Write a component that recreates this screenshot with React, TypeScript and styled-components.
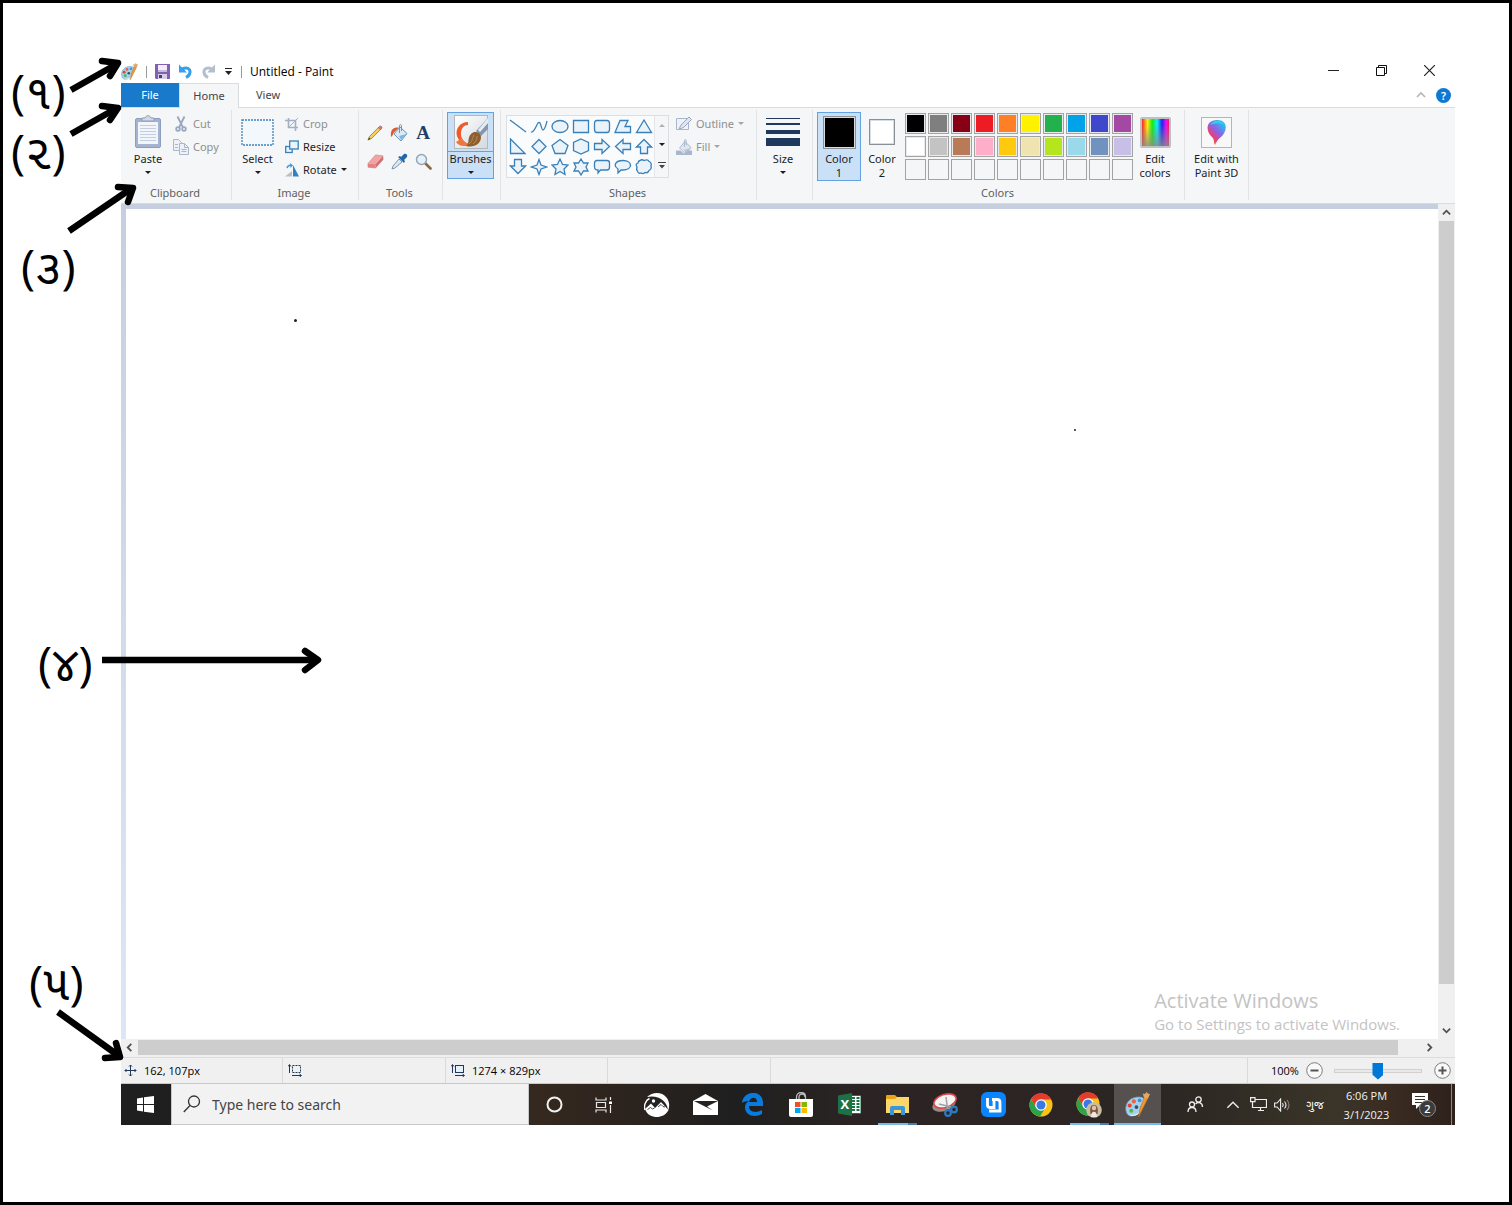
import React from "react";
import styled, { createGlobalStyle, css } from "styled-components";

const GlobalStyle = createGlobalStyle`
  *, *::before, *::after { box-sizing: border-box; }
  body { margin: 0; background: #fff; }
  body, input { font-family: "Open Sans", "Noto Sans", "Noto Sans Gujarati", sans-serif; }
  button { margin: 0; padding: 0; border: 0; background: none; color: inherit; font: inherit; }
  svg { display: block; flex: none; }
`;

/* ---------- page and window shell ---------- */

const Sheet = styled.div`
  position: relative;
  display: flex;
  min-height: 100vh;
  padding: 57px 54px 77px 118px;
  border: 3px solid #000;
  background: #fff;
`;

const Window = styled.main`
  flex: 1;
  min-width: 0;
  display: flex;
  flex-direction: column;
  font-size: 11px;
  line-height: 14px;
  color: #1e1e1e;
`;

const TitleBar = styled.header`
  display: flex;
  align-items: center;
  height: 23px;
`;

const QuickAccess = styled.div`
  display: flex;
  align-items: center;
  gap: 8px;
`;

const Rule = styled.span`
  width: 1px;
  height: 12px;
  background: #9a9a9a;
`;

const Title = styled.h1`
  margin: 0 auto 0 8px;
  font-size: 12px;
  font-weight: 400;
  color: #000;
`;

const Caption = styled.div`
  display: flex;
  align-self: flex-start;
  padding-right: 2px;
  height: 20px;
`;

const CaptionButton = styled.button`
  display: grid;
  place-items: center;
  width: 48px;
`;

const TabStrip = styled.nav`
  display: flex;
  height: 25px;
  border-bottom: 1px solid #dadbdc;
  font-family: "Noto Sans", "Open Sans", sans-serif;
`;

const Tab = styled.button<{ $kind?: "file" | "active" }>`
  width: 58px;
  height: 24px;
  color: #444;
  ${(p) => p.$kind === "file" && css`background: #1979ca; color: #fff;`}
  ${(p) =>
    p.$kind === "active" &&
    css`
      width: 60px;
      height: 25px;
      background: #f5f6f7;
      border: 1px solid #dadbdc;
      border-bottom: 0;
    `}
`;

const TabTools = styled.div`
  display: flex;
  align-items: center;
  gap: 10px;
  margin-left: auto;
  padding-right: 4px;
`;

/* ---------- ribbon ---------- */

const Ribbon = styled.section`
  display: flex;
  height: 96px;
  padding: 2px 0 3px;
  background: #f4f6f8;
  border-bottom: 1px solid #dadbdc;
  font-family: "Noto Sans", "Open Sans", sans-serif;
`;

const GroupBox = styled.section<{ $w: number }>`
  display: flex;
  flex-direction: column;
  flex: none;
  width: ${(p) => p.$w}px;
  padding-top: 2px;
  border-right: 1px solid #e2e3e5;
`;

const GroupBody = styled.div<{ $gap: number; $center?: boolean }>`
  display: flex;
  gap: ${(p) => p.$gap}px;
  height: 74px;
  padding-left: ${(p) => (p.$center ? 0 : 4)}px;
  justify-content: ${(p) => (p.$center ? "center" : "flex-start")};
`;

const GroupName = styled.h2`
  margin: 0;
  padding-right: 2px;
  font-size: 11px;
  font-weight: 400;
  line-height: 14px;
  color: #5f5f5f;
  text-align: center;
`;

const BigButton = styled.button<{ $w: number; $on?: boolean; $split?: boolean }>`
  display: flex;
  flex-direction: column;
  align-items: center;
  width: ${(p) => p.$w}px;
  height: ${(p) => (p.$split ? 67 : 69)}px;
  border: 1px solid ${(p) => (p.$on ? "#62a2e4" : "transparent")};
  background: ${(p) => (p.$on ? "#c9e0f7" : "none")};
`;

const BigIcon = styled.span<{ $split?: boolean }>`
  display: grid;
  place-items: center;
  align-self: stretch;
  height: 39px;
  border-bottom: 1px solid ${(p) => (p.$split ? "#62a2e4" : "transparent")};
`;

const BigText = styled.span`
  height: 14px;
  white-space: nowrap;
`;

const Caret = styled.i<{ $muted?: boolean }>`
  width: 0;
  height: 0;
  border: 3px solid transparent;
  border-top-color: ${(p) => (p.$muted ? "#a5a5a5" : "#1e1e1e")};
  border-bottom: 0;
`;

const CaretRow = styled.span`
  display: flex;
  align-items: center;
  height: 12px;
`;

const Rows = styled.div`
  display: flex;
  flex-direction: column;
  align-items: flex-start;
`;

const SmallButton = styled.button<{ $muted?: boolean }>`
  display: flex;
  align-items: center;
  gap: 4px;
  height: 23px;
  white-space: nowrap;
  color: ${(p) => (p.$muted ? "#8f8f8f" : "#1e1e1e")};
`;

const ToolGrid = styled.div`
  display: grid;
  grid-template-columns: repeat(3, 24px);
  grid-auto-rows: 29px;
  padding-top: 6px;
`;

const ToolButton = styled.button`
  display: grid;
  place-items: center;
`;

const ShapeBox = styled.div`
  display: flex;
  align-self: flex-start;
  margin: 3px 0 0 1px;
  border: 1px solid #dcdee1;
  background: #fafbfd;
`;

const ShapeGrid = styled.div`
  display: grid;
  grid-template-columns: repeat(7, 21px);
  grid-auto-rows: 20px;
  padding-top: 1px;
`;

const ShapeScroll = styled.div`
  display: grid;
  width: 14px;
  border-left: 1px solid #e4e6e9;
  background: #f4f6f8;
`;

const Palette = styled.div`
  display: grid;
  grid-template-columns: repeat(10, 21px);
  grid-auto-rows: 21px;
  gap: 2px;
  margin: 1px 2px 0;
  align-self: flex-start;
`;

const Swatch = styled.button<{ $c: string }>`
  border: 1px solid #a3a3a3;
  background: ${(p) => p.$c};
  box-shadow: inset 0 0 0 1px ${(p) => (p.$c === "transparent" ? "#f4f6f8" : "#e9eaec")};
`;

const ColorChip = styled.span<{ $c: string; $size: number }>`
  width: ${(p) => p.$size}px;
  height: ${(p) => p.$size}px;
  border: 1px solid #8a9096;
  background: ${(p) => p.$c};
  box-shadow: inset 0 0 0 1px #d5dce4;
`;

const Rainbow = styled.span`
  width: 31px;
  height: 31px;
  border: 2px solid #c0c0c0;
  border-radius: 2px;
  background: linear-gradient(transparent 20%, #8a8a8a 120%),
    linear-gradient(90deg, #f22, #fe1 20%, #1e1 38%, #1ef 56%, #22e 74%, #e1e 90%, #f15);
`;

const PaintTile = styled.span`
  display: grid;
  place-items: center;
  width: 31px;
  height: 31px;
  border: 1px solid #b5b5b5;
  background: #f8f8f8;
`;

/* ---------- canvas and scroll bars ---------- */

const Workspace = styled.section`
  flex: 1;
  display: flex;
`;

const Desk = styled.div`
  flex: 1;
  display: flex;
  padding: 5px 0 0 5px;
  background: linear-gradient(#c5cfe0, #dce6f4);
`;

const Canvas = styled.div`
  position: relative;
  flex: 1;
  display: flex;
  justify-content: flex-end;
  align-items: flex-end;
  padding: 0 38px 4px 0;
  background: #fff;
`;

const Dot = styled.i<{ $x: number; $y: number; $s: number }>`
  position: absolute;
  left: ${(p) => p.$x}px;
  top: ${(p) => p.$y}px;
  width: ${(p) => p.$s}px;
  height: ${(p) => p.$s}px;
  border-radius: 50%;
  background: #222;
`;

const Watermark = styled.div`
  color: #c3c3c3;
  font-size: 15px;
  line-height: 21px;
`;

const WatermarkTitle = styled.div`
  font-size: 20px;
  line-height: 26px;
`;

const ScrollBar = styled.div<{ $vertical?: boolean }>`
  display: flex;
  flex-direction: ${(p) => (p.$vertical ? "column" : "row")};
  background: #f0f0f0;
  ${(p) => (p.$vertical ? "width: 17px; padding: 0 1px;" : "height: 18px; padding: 1px 17px 2px 0;")}
`;

const ScrollArrow = styled.button`
  display: grid;
  place-items: center;
  flex: none;
  min-width: 15px;
  min-height: 15px;
  flex-basis: 17px;
`;

const Thumb = styled.span<{ $grow: number }>`
  flex: ${(p) => p.$grow};
  background: #cdcdcd;
`;

const Remain = styled.span<{ $grow: number }>`
  flex: ${(p) => p.$grow};
`;

/* ---------- status bar ---------- */

const StatusBar = styled.footer`
  display: grid;
  grid-template-columns: 162px 163px 162px 163px 1fr 207px;
  height: 27px;
  border-top: 1px solid #dcdcdc;
  border-bottom: 1px solid #c8c8c8;
  background: #f0f0f0;
`;

const StatusCell = styled.div`
  display: flex;
  align-items: center;
  gap: 7px;
  padding-left: 3px;
  color: #000;
  border-right: 1px solid #d9d9d9;
  &:nth-child(n + 2) { padding-left: 5px; }
  &:last-child { border-right: 0; padding: 0 4px 0 23px; }
`;

const ZoomButton = styled.button`
  flex: none;
`;

const ZoomRange = styled.input`
  appearance: none;
  flex: 1;
  min-width: 0;
  height: 16px;
  margin: 0 5px 0 4px;
  background: linear-gradient(#d0d0d0, #d0d0d0) center / 100% 4px no-repeat;
  &::-webkit-slider-runnable-track {
    height: 16px;
    background: linear-gradient(#e9e9e9, #e9e9e9) center / 98% 2px no-repeat;
  }
  &::-webkit-slider-thumb {
    appearance: none;
    width: 11px;
    height: 17px;
    background: #0078d7;
    clip-path: polygon(0 0, 100% 0, 100% 72%, 50% 100%, 0 72%);
  }
`;

/* ---------- taskbar ---------- */

const TaskBar = styled.footer`
  display: flex;
  height: 41px;
  background: linear-gradient(90deg, #1f1f1f 0%, #1f1f1f 4%, #35291f 31%, #2d241e 37%, #1f1f1f 46%, #2c2424 56%, #2b2523 76%, #302b24 83%, #3b3529 91%, #3a2c21 95%, #2e211c 100%);
`;

const TaskButton = styled.button<{ $w?: number; $state?: "open" | "active" }>`
  display: grid;
  place-items: center;
  flex: none;
  width: ${(p) => p.$w ?? 48}px;
  color: #fff;
  ${(p) =>
    p.$state === "open" &&
    css`
      background: linear-gradient(90deg, #76b9ed 0 78%, #4b7dab 78%) center bottom / 39px 2px no-repeat;
    `}
  ${(p) =>
    p.$state === "active" &&
    css`
      background: linear-gradient(#76b9ed, #76b9ed) center bottom / 47px 2px no-repeat,
        linear-gradient(#56514e, #56514e) center / 47px 100% no-repeat;
    `}
`;

const LanguageButton = styled(TaskButton)`
  font-size: 12px;
`;

const SearchBox = styled.label`
  display: flex;
  align-items: center;
  gap: 9px;
  width: 358px;
  margin-left: 1px;
  padding-left: 11px;
  background: #f2f2f2;
  border: 1px solid #c8c8c8;
  border-top: 0;
`;

const SearchInput = styled.input`
  flex: 1;
  min-width: 0;
  border: 0;
  outline: 0;
  background: none;
  font-family: "Noto Sans", "Open Sans", sans-serif;
  font-size: 14px;
  color: #444;
  &::placeholder { color: #444; opacity: 1; }
`;

const Pair = styled.div`
  display: flex;
  margin-right: 4px;
`;

const Tray = styled.div`
  display: flex;
  margin-left: auto;
  color: #f2f2f2;
`;

const Clock = styled.time`
  display: block;
  width: 61px;
  padding-top: 2px;
  font-size: 11px;
  line-height: 19px;
  text-align: center;
`;

const ShowDesktop = styled.button`
  width: 4px;
  border-left: 1px solid #8d8580;
`;

/* ---------- callouts over the window ---------- */

const Callout = styled.span<{ $x: number; $y: number }>`
  position: absolute;
  left: ${(p) => p.$x}px;
  top: ${(p) => p.$y}px;
  font-size: 48px;
  line-height: 54px;
  color: #000;
  white-space: nowrap;
`;

const Arrows = styled.svg`
  position: absolute;
  left: -3px;
  top: -3px;
  pointer-events: none;
`;

/* ---------- drawings ---------- */

const PaintLogo = ({ size = 17 }: { size?: number }) => (
  <svg width={size} height={size} viewBox="0 0 24 24">
    <path d="M1.500 20C-1 13 3 6 11 5c7-1 10 3 8 6-2 2-4 1-4 4 1 5-4 8-9 8-2 0-3.500-1-4.500-3z" fill="#a3d0ee" stroke="#6d9fc6" strokeWidth=".8" />
    <path d="M1.500 20c2 3 8 3 12.500-1-1 3-4 4-7 4-2 0-4.500-1-5.500-3z" fill="#e9f5fc" />
    <circle cx="8.500" cy="9" r="2" fill="#e7653c" /><circle cx="14" cy="8" r="1.800" fill="#3f8fd8" />
    <circle cx="4.500" cy="13" r="2" fill="#e24536" /><circle cx="6" cy="18" r="2" fill="#53b848" />
    <circle cx="11" cy="14.500" r="1.800" fill="#3c4d63" />
    <path d="M22 6L13 24l1.500-8.500L18.500 5z" fill="#f0982f" stroke="#b3691c" strokeWidth=".5" />
    <path d="M18.300 5.500L17 1.500l2.200.5L20.500 0l1.500 1.500 2 .5L22 6.500z" fill="#dfa76a" />
  </svg>
);

const Save = () => (
  <svg width="15" height="15" viewBox="0 0 15 15">
    <path d="M0 0h15v15H1l-1-1z" fill="#8460b0" />
    <path d="M3 1h9v7H3z" fill="#f0eef8" /><path d="M3 6h9v2H3z" fill="#c7b9e0" />
    <path d="M3 10h9v5H3z" fill="#d6cfe8" /><path d="M4 11h3v3H4z" fill="#4e3a78" />
  </svg>
);

const Turn = ({ color, flip }: { color: string; flip?: boolean }) => (
  <svg width="15" height="15" viewBox="0 0 15 15">
    <g transform={flip ? "matrix(-1 0 0 1 15 0)" : undefined}>
      <path d="M4 5c5-2.500 8.500 0 8 3.500-.3 2.500-2 4-4 5" fill="none" stroke={color} strokeWidth="3" />
      <path d="M1 .5v8h8z" fill={color} />
    </g>
  </svg>
);

const Clipboard = () => (
  <svg width="26" height="34" viewBox="0 0 26 34">
    <rect x=".5" y="3.500" width="25" height="29" rx="1.500" fill="#a4b3cf" stroke="#8c9dbd" />
    <rect x="3" y="7" width="20" height="22" fill="#f2f6fb" />
    <path d="M5 10.500h16M5 13.500h16M5 16.500h16M5 19.500h16M5 22.500h16M5 25.500h16" stroke="#c2cfe2" />
    <path d="M7 6V3h3c1-3 5-3 6 0h3v3z" fill="#cfd9e8" stroke="#8c9dbd" />
  </svg>
);

const Scissors = () => (
  <svg width="16" height="16" viewBox="0 0 16 16" fill="none" stroke="#9aa7be" strokeWidth="1.800">
    <path d="M4.500.5l5.500 11M11.500.5L6 11.500" /><circle cx="5" cy="13" r="1.800" /><circle cx="11" cy="13" r="1.800" />
  </svg>
);

const Pages = () => (
  <svg width="16" height="16" viewBox="0 0 16 16" fill="#eef2f8" stroke="#a9b6cc">
    <path d="M.5.5h5l3 3v8h-8z" /><path d="M6.500 4.500h5l4 4v7h-9z" /><path d="M11.500 4.500v4h4M8.500 10.500h5M8.500 12.500h5M2 5.500h3M2 8.500h3" fill="none" />
  </svg>
);

const Marquee = () => (
  <svg width="33" height="27" viewBox="0 0 33 27"><rect x="1" y="1" width="31" height="25" fill="#f3f8fc" stroke="#3e83bb" strokeWidth="1.300" strokeDasharray="2 1" /></svg>
);

const Crop = () => (
  <svg width="14" height="14" viewBox="0 0 14 14" fill="none" stroke="#a3afc4" strokeWidth="1.600">
    <path d="M3.500 1v9.500H13M0 3.500h10.500V14" /><path d="M4 10l9-9" strokeWidth="1" />
  </svg>
);

const Resize = () => (
  <svg width="14" height="14" viewBox="0 0 14 14" fill="#eaf4fb" stroke="#3a80b8" strokeWidth="1.300">
    <rect x=".7" y="6.500" width="6.500" height="6" /><rect x="4.700" y="1" width="8.500" height="8" />
  </svg>
);

const Rotate = () => (
  <svg width="14" height="14" viewBox="0 0 14 14">
    <path d="M0 13.500h7V8z" fill="#b9bec5" /><path d="M8 2v11.500h6z" fill="#2f83c5" />
    <path d="M2 5c1-3 3-3 5-2.500" fill="none" stroke="#3a9be8" strokeWidth="1.400" /><path d="M5 0l3 2.500L5.500 5z" fill="#3a9be8" />
  </svg>
);

const Pencil = () => (
  <svg width="16" height="16" viewBox="0 0 17 17">
    <path d="M1 16l1.800-4L12.500 2.300l2.200 2.200L5 14.200z" fill="#f4cf5e" stroke="#8d7430" strokeWidth=".8" />
    <path d="M12 2.800l1.500-1.500c1-1 3.200 1.200 2.200 2.200L14.200 5z" fill="#e4737b" stroke="#9b4a50" strokeWidth=".6" />
    <path d="M1 16l1.200-2.800L3.800 14.800z" fill="#4a4438" />
  </svg>
);

const Bucket = ({ muted }: { muted?: boolean }) => (
  <svg width={muted ? 16 : 18} height={muted ? 16 : 18} viewBox="0 0 18 18">
    <path d="M10 3l7 6.500L11 17 4 10z" fill={muted ? "#dfe6f0" : "#d9e9f5"} stroke={muted ? "#a5b2c8" : "#6a94b8"} />
    <path d="M9 12l7.500-2L11 16z" fill={muted ? "#bac6d8" : "#7db8e3"} />
    <path d="M9.500 9V1.500c0-1 2-1 2 0V7" fill="none" stroke={muted ? "#a5b2c8" : "#8a8f96"} />
    {muted ? <path d="M0 13h5l4 3.500 4-3.500h5v5H0z" fill="#a9b7ce" /> : <path d="M9 3.500C4 3 0 5 1 13c2-1 2-4 3.500-5z" fill="#e4572b" />}
  </svg>
);

const LetterA = () => (
  <svg width="22" height="24" viewBox="0 0 22 24">
    <text x="11" y="18" textAnchor="middle" fontFamily="Liberation Serif, serif" fontWeight="700" fontSize="19" fill="#233d63">A</text>
  </svg>
);

const Eraser = () => (
  <svg width="17" height="15" viewBox="0 0 18 16">
    <path d="M1 10L9 1l8 1-8 9z" fill="#f2a3a3" /><path d="M1 10l8 1v4l-8-1z" fill="#e87f80" /><path d="M9 11l8-9v4l-8 9z" fill="#d56c6f" />
    <path d="M1 10L9 1l8 1v4l-8 9-8-1z" fill="none" stroke="#c27a7c" strokeWidth=".6" />
  </svg>
);

const Dropper = () => (
  <svg width="17" height="17" viewBox="0 0 17 17">
    <path d="M1 16l1-3 6-7 3 3-7 6z" fill="#d9e8f3" stroke="#6d8ba5" strokeWidth=".9" />
    <path d="M7 4l2-1 1 1 3-3c2-1 4 1 3 3l-3 3 1 1-1 2z" fill="#2267a8" />
  </svg>
);

const Magnifier = () => (
  <svg width="17" height="17" viewBox="0 0 17 17">
    <path d="M10 10l5.500 5.500" stroke="#8a6848" strokeWidth="2.600" strokeLinecap="round" />
    <circle cx="6.500" cy="6.500" r="5" fill="#e3f1fa" stroke="#97a6b4" strokeWidth="1.500" />
  </svg>
);

const BrushArt = () => (
  <svg width="34" height="34" viewBox="0 0 34 34">
    <defs><linearGradient id="paper" x2="1" y2="1"><stop stopColor="#fff" /><stop offset="1" stopColor="#d4d9dd" /></linearGradient></defs>
    <rect x=".5" y=".5" width="33" height="33" fill="url(#paper)" stroke="#b3b8bd" />
    <path d="M14 7C6 7 1 14 3 21c2 6 7 9 13 9-5-2-9-5-9-11C7 13 10 10 14 10z" fill="#ee5a2a" />
    <path d="M2 27c3 5 10 5 16 2-5 0-9-3-10-6z" fill="#f0763f" />
    <path d="M34 3L22 16l5 5 7-7z" fill="#8496ae" /><path d="M34 3L24 15l2 2 8-9z" fill="#e6ecf2" />
    <path d="M12 31c4-3 1-8 5-12 4-4 10-1 10 3 0 7-7 11-15 9z" fill="#8f5f30" /><path d="M15 29c4-3 3-6 5-9M19 29c3-2 4-5 4-8" fill="none" stroke="#b98a54" />
  </svg>
);

const SizeBars = () => (
  <svg width="34" height="30" viewBox="0 0 34 30" fill="#1e395b"><path d="M0 1h34v1H0zM0 6h34v2H0zM0 13h34v4H0zM0 21h34v8H0z" /></svg>
);

const OutlineIcon = () => (
  <svg width="16" height="16" viewBox="0 0 16 16">
    <path d="M.5 2.500h12v11H.5z" fill="#eef2f8" stroke="#a9b6cc" /><path d="M3 13l2-4 8-8 2.500 2.500-8 8z" fill="#dfe6f0" stroke="#9aa7be" />
  </svg>
);

const Pin3D = () => (
  <svg width="20" height="26" viewBox="0 0 20 26">
    <defs>
      <linearGradient id="pin" x1="0" y1="1" x2=".8" y2="0"><stop offset=".1" stopColor="#ffb02e" /><stop offset=".32" stopColor="#ee3d6b" /><stop offset=".6" stopColor="#8a63e8" /><stop offset=".95" stopColor="#22c3ee" /></linearGradient>
    </defs>
    <path d="M10 1c12 0 10 12 4 17-3 2-4 4-6 8-2-3 0-5-3-8C-2 12-1 1 10 1z" fill="url(#pin)" /><path d="M3 6c3-5 11-6 14-1-5-1-9-1-14 1z" fill="#35cdef" />
  </svg>
);

const shapePaths: { label: string; d: string }[] = [
  { label: "Line", d: "M1 2L17 14" },
  { label: "Curve", d: "M1 14C4 15 6 8 8 5c3-3 3 7 5 7s3-5 4-9" },
  { label: "Oval", d: "M1 8.500a8 6 0 1 0 16 0a8 6 0 1 0-16 0z" },
  { label: "Rectangle", d: "M1.500 2.500h15v12h-15z" },
  { label: "Rounded rectangle", d: "M4 2.500h10q2.500 0 2.500 3v6q0 3-2.500 3H4q-2.500 0-2.500-3v-6q0-3 2.500-3z" },
  { label: "Polygon", d: "M6 2.500h8l-3 6h5.500v6H1z" },
  { label: "Triangle", d: "M9 2l7.500 12.500h-15z" },
  { label: "Right triangle", d: "M1.500 1v14.500H16z" },
  { label: "Diamond", d: "M9 1.500l7 7-7 7-7-7z" },
  { label: "Pentagon", d: "M9 1.500l8 6-3 8H4l-3-8z" },
  { label: "Hexagon", d: "M9 1l7.500 3.500v8L9 16l-7.500-3.500v-8z" },
  { label: "Right arrow", d: "M1.500 5.500H9v-4l7.500 7L9 15.500v-4H1.500z" },
  { label: "Left arrow", d: "M16.500 5.500H9v-4l-7.500 7 7.500 7v-4h7.500z" },
  { label: "Up arrow", d: "M5.500 15.500V9h-4L9 1.500 16.500 9h-4v6.500z" },
  { label: "Down arrow", d: "M5.500 1.500V8h-4L9 15.500 16.500 8h-4V1.500z" },
  { label: "Four-point star", d: "M9 1.500l2 5.500 5.500 2-5.500 2-2 5.500L7 11 1.500 9 7 7z" },
  { label: "Five-point star", d: "M9 1l2.500 5.500 5.500.5-4 4 1 5.500-5-3-5 3 1-5.500-4-4 5.500-.5z" },
  { label: "Six-point star", d: "M9 1l2.500 4H16l-2 4 2 4h-4.500L9 17l-2.500-4H2l2-4-2-4h4.500z" },
  { label: "Rounded callout", d: "M4 2.500h10q2.500 0 2.500 2.500v4q0 3-2.500 3H7.500L5 15v-3q-3.500 0-3.500-3V5q0-2.500 2.500-2.500z" },
  { label: "Oval callout", d: "M9 2.500c10 0 10 9.500 0 9.500H7l-3 3v-4C-1 8 1 2.500 9 2.500z" },
  { label: "Cloud callout", d: "M5 2.500q2-1.500 4 0 4-1.500 5 1 3 1 2 4.500 1 3-2 4.500-1 3-4 2-2 2-4 .5-3 1-3.500-2Q1 12 2 9 0 6 3 5q0-2 2-2.500z" },
];

const ShapeIcon = ({ d, open }: { d: string; open?: boolean }) => (
  <svg width="18" height="18" viewBox="0 0 18 18"><path d={d} fill={open ? "none" : "#eaf3fa"} stroke="#3a80b8" strokeWidth="1.300" /></svg>
);

const Chevron = ({ dir, color = "#505050", size = 9, weight = 2 }: { dir: "up" | "down" | "left" | "right"; color?: string; size?: number; weight?: number }) => {
  const turn = { up: 0, right: 90, down: 180, left: 270 }[dir];
  return (
    <svg width={size} height={size} viewBox="0 0 10 10"><path d="M1 7l4-4 4 4" transform={`rotate(${turn} 5 5)`} fill="none" stroke={color} strokeWidth={weight} /></svg>
  );
};

const Help = () => (
  <svg width="15" height="15" viewBox="0 0 15 15"><circle cx="7.500" cy="7.500" r="7.500" fill="#0f78d1" /><text x="7.500" y="11.500" textAnchor="middle" fontSize="11" fontWeight="600" fill="#fff">?</text></svg>
);

const MoveIcon = () => (
  <svg width="13" height="13" viewBox="0 0 13 13" fill="none" stroke="#1e395b"><path d="M6.500 1v11M1 6.500h11" /><path d="M5 2.500L6.500 1 8 2.500M5 10.500L6.500 12 8 10.500M2.500 5L1 6.500 2.500 8M10.500 5L12 6.500 10.500 8" /></svg>
);

const ExtentIcon = ({ dashed }: { dashed?: boolean }) => (
  <svg width="14" height="13" viewBox="0 0 14 13" fill="none" stroke="#1e395b">
    <rect x="4.500" y="1.500" width="8" height="7" fill={dashed ? "none" : "#e4f0fa"} strokeDasharray={dashed ? "2 1" : undefined} />
    <path d="M1.500 1v8M0 2.500l1.500-2 1.500 2M4 11.500h9M11.500 10l2 1.500-2 1.500" />
  </svg>
);

const ZoomSign = ({ plus }: { plus?: boolean }) => (
  <svg width="17" height="17" viewBox="0 0 17 17"><circle cx="8.500" cy="8.500" r="7.800" fill="#f9f9f9" stroke="#7c7c7c" /><path d={plus ? "M4.500 8.500h8M8.500 4.500v8" : "M4.500 8.500h8"} stroke="#555" strokeWidth="2" /></svg>
);

const WindowsLogo = () => (
  <svg width="17" height="17" viewBox="0 0 17 17" fill="#fff"><path d="M0 2.500L6 1.500V8H0zM7 1.300L17 0v8H7zM0 9h6v6.500l-6-1zM7 9h10v8L7 15.700z" /></svg>
);

const SearchGlass = () => (
  <svg width="18" height="18" viewBox="0 0 18 18" fill="none" stroke="#333" strokeWidth="1.300"><circle cx="11" cy="6.500" r="5.500" /><path d="M7 10.500L.8 17" /></svg>
);

const TaskView = () => (
  <svg width="18" height="16" viewBox="0 0 18 16" fill="none" stroke="#e8e8e8" strokeWidth="1.200">
    <path d="M1 .5v2.500h10V.5M1 15.500V13h10v2.500M1.500 5.500h9v5h-9zM15.500 0v3M15.500 8v8" /><path d="M14 4.500h3v2.500h-3z" fill="#fff" stroke="none" />
  </svg>
);

const Photos = () => (
  <svg width="26" height="24" viewBox="0 0 26 24">
    <path d="M3 4C9-1.500 18-1 22.500 4.500c3 4 3.500 9 1.500 13C23.500 8 14 1.500 3 4z" fill="#fff" />
    <path d="M5 5.500c8-1.500 15 2 18 10l-4-4-4-2-5 6-3-4z" fill="#232323" />
    <path d="M1 17C-.5 12 2 7 5.500 5.500" fill="none" stroke="#fff" strokeWidth="1.400" />
    <path d="M1 16l6-5.500 4 4.500 6-6 7.500 8C22 22 17 24 13 24 8 24 3 22 1 16z" fill="#fff" /><circle cx="9.500" cy="8" r="1.700" fill="#fff" />
    <path d="M3.500 16.500l3-2 2 1.500 2-1M14 14l3-2.500 2 2 2 .5" fill="none" stroke="#333" strokeWidth=".9" />
  </svg>
);

const Mail = () => (
  <svg width="25" height="21" viewBox="0 0 25 21"><path d="M0 7l12.500-7L25 7v14H0z" fill="#fff" /><path d="M1 7h24l-11 5.500 6 4z" fill="#222" /></svg>
);

const Edge = () => (
  <svg width="22" height="23" viewBox="0 0 22 23"><path d="M0 10C1-3 21-4 21 10v3H7c0 7 8 7 13 4v4C13 25 3 23 3 14c0-3 2-5 4-6-4 0-6 1-7 2zm7-1h8c0-6-7-5-8 0z" fill="#0a7bdc" /></svg>
);

const Store = () => (
  <svg width="24" height="25" viewBox="0 0 24 25">
    <path d="M7.500 7V5c0-6 9-6 9 0v2M10 7V5c0-4 6-4 6 0" fill="none" stroke="#bbb" strokeWidth="1.300" /><path d="M0 7h24v16q0 2-2 2H2q-2 0-2-2z" fill="#fff" />
    <path d="M6 10h5.500v5H6z" fill="#f25022" /><path d="M12.500 10H18v5h-5.500z" fill="#7fba00" /><path d="M6 16h5.500v5H6z" fill="#00a4ef" /><path d="M12.500 16H18v5h-5.500z" fill="#ffb900" />
  </svg>
);

const Excel = () => (
  <svg width="23" height="23" viewBox="0 0 23 23">
    <path d="M12 2.500h11v18H12z" fill="#fff" stroke="#1e7145" /><path d="M14 5h3M18.500 5h3M14 8h3M18.500 8h3M14 11h3M18.500 11h3M14 14h3M18.500 14h3M14 17h3M18.500 17h3" stroke="#1e7145" strokeWidth="1.800" />
    <path d="M0 2.500L14 0v23L0 20.500z" fill="#1e7145" /><text x="6.800" y="16" textAnchor="middle" fontSize="13" fontWeight="700" fill="#fff">X</text>
  </svg>
);

const Explorer = () => (
  <svg width="23" height="20" viewBox="0 0 23 20">
    <path d="M0 1q0-1 1-1h8l2 2h11q1 0 1 1v15H0z" fill="#e8a317" /><path d="M0 4h9l2-2h12v16H0z" fill="#fdd868" />
    <path d="M4 20v-7q0-2 2-2h11q2 0 2 2v7h-4v-5H8v5z" fill="#3a97dc" />
  </svg>
);

const Snip = () => (
  <svg width="26" height="24" viewBox="0 0 26 24">
    <ellipse cx="12" cy="11.500" rx="12" ry="6.500" transform="rotate(-18 12 11.500)" fill="#a0898a" /><ellipse cx="13" cy="8" rx="11.500" ry="6.500" transform="rotate(-18 13 8)" fill="#f7f3f3" stroke="#d9484b" strokeWidth="1.600" />
    <path d="M7 11l12 3M14 4l1.500 12" stroke="#9aa0a6" strokeWidth="1.500" /><circle cx="16" cy="20" r="2.800" fill="none" stroke="#2a7cc0" strokeWidth="2.200" /><circle cx="22" cy="16.500" r="2.800" fill="none" stroke="#2a7cc0" strokeWidth="2.200" />
  </svg>
);

const FourApp = () => (
  <svg width="25" height="25" viewBox="0 0 25 25"><rect width="25" height="25" rx="6" fill="#0a84ff" /><path d="M6.500 6v7q0 2.500 2.500 2.500h4V6M11 7.500h5q3 0 3 3V19H8" fill="none" stroke="#fff" strokeWidth="2.800" /></svg>
);

const Chrome = ({ badge }: { badge?: boolean }) => (
  <svg width={badge ? 26 : 24} height={badge ? 26 : 24} viewBox={badge ? "0 0 26 26" : "0 0 24 24"}>
    <circle cx="12" cy="12" r="11.500" fill="#fbc116" />
    <path d="M2 6.200A11.500 11.500 0 0 1 22.200 6.500H12z" fill="#e33b2e" /><path d="M2 6.200L7.200 14.500 12 12V6z" fill="#e33b2e" />
    <path d="M2 6.200A11.500 11.500 0 0 0 11 23.500l5.500-9L7.500 15z" fill="#2ba24c" />
    <circle cx="12" cy="12" r="5.800" fill="#fff" /><circle cx="12" cy="12" r="4.500" fill="#3b78e7" />
    {badge && (<><circle cx="18" cy="18" r="7.800" fill="#c9bd9f" /><path d="M14.500 22c-1-6 0-9 3.500-9s4.500 4 3.500 9z" fill="#7d5a41" /><circle cx="18" cy="16" r="2.200" fill="#e7c3a5" /><path d="M15 25c0-7 6-7 6 0z" fill="#efe9e2" /></>)}
  </svg>
);

const People = () => (
  <svg width="17" height="17" viewBox="0 0 17 17" fill="none" stroke="#eee" strokeWidth="1.300"><circle cx="5" cy="8.500" r="2.500" /><path d="M1 16c0-6 8-6 8 0" /><circle cx="11.500" cy="3.500" r="2.700" /><path d="M8.500 8c3-3 7-1 7 3" /></svg>
);

const Network = () => (
  <svg width="17" height="15" viewBox="0 0 17 15" fill="none" stroke="#eee" strokeWidth="1.200"><path d="M5 2.500h11.500v8H4M.6.6H5v4H.6zM2.500 5v5.500h3M8 13.500h6M10.500 11v2" /></svg>
);

const Speaker = () => (
  <svg width="17" height="14" viewBox="0 0 17 14" fill="none" stroke="#eee" strokeWidth="1.100"><path d="M.6 5h2.500l3.500-4v12L3.100 9H.6z" /><path d="M8.500 5q1.500 2 0 4M10.500 3.500q3 3.500 0 7" /><path d="M13 2q4 5 0 10" stroke="#8a837a" /></svg>
);

const Notice = () => (
  <svg width="26" height="25" viewBox="0 0 26 25">
    <path d="M1 1h16v12H9l-4 4v-4H1z" fill="#fff" /><path d="M4 4.500h10M4 7.500h10M4 10.500h10" stroke="#3a3026" strokeWidth="1.100" />
    <circle cx="16.500" cy="16.500" r="8" fill="#3b3b3b" stroke="#8b8b8b" /><text x="16.500" y="20.500" textAnchor="middle" fontSize="11" fontWeight="600" fill="#fff">2</text>
  </svg>
);

/* ---------- composed parts ---------- */

const Group = ({ name, w, gap = 0, center, children }: { name: string; w: number; gap?: number; center?: boolean; children: React.ReactNode }) => (
  <GroupBox $w={w}>
    <GroupBody $gap={gap} $center={center}>{children}</GroupBody>
    {name && <GroupName>{name}</GroupName>}
  </GroupBox>
);

type BigProps = { icon: React.ReactNode; text: string; second?: string; w: number; on?: boolean; split?: boolean };
const Big = ({ icon, text, second, w, on, split }: BigProps) => (
  <BigButton $w={w} $on={on} $split={split}>
    <BigIcon $split={split}>{icon}</BigIcon>
    <BigText>{text}</BigText>
    {second ? <BigText>{second}</BigText> : <CaretRow><Caret /></CaretRow>}
  </BigButton>
);

const tools = [
  { label: "Pencil", icon: <Pencil /> },
  { label: "Fill with color", icon: <Bucket /> },
  { label: "Text", icon: <LetterA /> },
  { label: "Eraser", icon: <Eraser /> },
  { label: "Color picker", icon: <Dropper /> },
  { label: "Magnifier", icon: <Magnifier /> },
];

const colors = [
  "#000000", "#7f7f7f", "#880015", "#ed1c24", "#ff7f27", "#fff200", "#22b14c", "#00a2e8", "#3f48cc", "#a349a4",
  "#ffffff", "#c3c3c3", "#b97a57", "#ffaec9", "#ffc90e", "#efe4b0", "#b5e61d", "#99d9ea", "#7092be", "#c8bfe7",
  ...Array<string>(10).fill("transparent"),
];

const apps: { label: string; icon: React.ReactNode; state?: "open" | "active" }[] = [
  { label: "Photos", icon: <Photos /> },
  { label: "Mail", icon: <Mail /> },
  { label: "Edge", icon: <Edge /> },
  { label: "Store", icon: <Store /> },
  { label: "Excel", icon: <Excel /> },
  { label: "File Explorer", icon: <Explorer />, state: "open" },
  { label: "Snipping Tool", icon: <Snip /> },
  { label: "Keyboard app", icon: <FourApp /> },
  { label: "Chrome", icon: <Chrome /> },
  { label: "Chrome profile", icon: <Chrome badge />, state: "open" },
  { label: "Paint", icon: <PaintLogo size={25} />, state: "active" },
];

const callouts = [
  { text: "(૧)", x: 8, y: 61 },
  { text: "(૨)", x: 8, y: 121 },
  { text: "(૩)", x: 18, y: 236 },
  { text: "(૪)", x: 35, y: 633 },
  { text: "(૫)", x: 26, y: 952 },
];

export default function App() {
  return (
    <Sheet>
      <GlobalStyle />
      <Window>
        <TitleBar>
          <QuickAccess>
            <PaintLogo />
            <Rule />
            <button aria-label="Save"><Save /></button>
            <button aria-label="Undo"><Turn color="#35a0ea" /></button>
            <button aria-label="Redo"><Turn color="#b4bfce" flip /></button>
            <button aria-label="Customize toolbar">
              <svg width="9" height="9" viewBox="0 0 9 9"><path d="M1 1.500h7" stroke="#222" /><path d="M1 4h7L4.500 8z" fill="#222" /></svg>
            </button>
            <Rule />
          </QuickAccess>
          <Title>Untitled - Paint</Title>
          <Caption>
            <CaptionButton aria-label="Minimize"><svg width="11" height="11" viewBox="0 0 11 11"><path d="M0 5.500h11" stroke="#222" /></svg></CaptionButton>
            <CaptionButton aria-label="Restore"><svg width="11" height="11" viewBox="0 0 11 11" fill="none" stroke="#111"><path d="M.5 2.500h8v8h-8zM2.500 2.500v-2h8v8h-2" /></svg></CaptionButton>
            <CaptionButton aria-label="Close"><svg width="11" height="11" viewBox="0 0 11 11"><path d="M0 0l11 11M11 0L0 11" stroke="#222" strokeWidth="1.200" /></svg></CaptionButton>
          </Caption>
        </TitleBar>

        <TabStrip>
          <Tab $kind="file">File</Tab>
          <Tab $kind="active">Home</Tab>
          <Tab>View</Tab>
          <TabTools>
            <button aria-label="Collapse ribbon"><Chevron dir="up" color="#b5b5b5" size={10} weight={1.6} /></button>
            <button aria-label="Help"><Help /></button>
          </TabTools>
        </TabStrip>

        <Ribbon>
          <Group name="Clipboard" w={111} gap={2}>
            <Big w={46} icon={<Clipboard />} text="Paste" />
            <Rows>
              <SmallButton $muted><Scissors />Cut</SmallButton>
              <SmallButton $muted><Pages />Copy</SmallButton>
            </Rows>
          </Group>
          <Group name="Image" w={127} gap={6}>
            <Big w={43} icon={<Marquee />} text="Select" />
            <Rows>
              <SmallButton $muted><Crop />Crop</SmallButton>
              <SmallButton><Resize />Resize</SmallButton>
              <SmallButton><Rotate />Rotate<Caret /></SmallButton>
            </Rows>
          </Group>
          <Group name="Tools" w={84}>
            <ToolGrid>
              {tools.map((t) => <ToolButton key={t.label} aria-label={t.label}>{t.icon}</ToolButton>)}
            </ToolGrid>
          </Group>
          <Group name="" w={58}>
            <Big w={47} on split icon={<BrushArt />} text="Brushes" />
          </Group>
          <Group name="Shapes" w={256} gap={7}>
            <ShapeBox>
              <ShapeGrid>
                {shapePaths.map((s, i) => <ToolButton key={s.label} aria-label={s.label}><ShapeIcon d={s.d} open={i < 2} /></ToolButton>)}
              </ShapeGrid>
              <ShapeScroll>
                <ToolButton aria-label="Scroll shapes up"><svg width="6" height="3" viewBox="0 0 6 3"><path d="M0 3l3-3 3 3z" fill="#b0b0b0" /></svg></ToolButton>
                <ToolButton aria-label="Scroll shapes down"><Caret /></ToolButton>
                <ToolButton aria-label="More shapes"><svg width="8" height="7" viewBox="0 0 8 7"><path d="M0 .5h8" stroke="#444" /><path d="M1 3h6L4 6.500z" fill="#444" /></svg></ToolButton>
              </ShapeScroll>
            </ShapeBox>
            <Rows>
              <SmallButton $muted><OutlineIcon />Outline<Caret $muted /></SmallButton>
              <SmallButton $muted><Bucket muted />Fill<Caret $muted /></SmallButton>
            </Rows>
          </Group>
          <Group name="" w={56}>
            <Big w={44} icon={<SizeBars />} text="Size" />
          </Group>
          <Group name="Colors" w={372}>
            <Big w={44} on icon={<ColorChip $c="#000" $size={33} />} text="Color" second="1" />
            <Big w={42} icon={<ColorChip $c="#fff" $size={26} />} text="Color" second="2" />
            <Palette>
              {colors.map((c, i) => <Swatch key={i} $c={c} aria-label={`Palette color ${i + 1}`} />)}
            </Palette>
            <Big w={40} icon={<Rainbow />} text="Edit" second="colors" />
          </Group>
          <Group name="" w={64} center>
            <Big w={58} icon={<PaintTile><Pin3D /></PaintTile>} text="Edit with" second="Paint 3D" />
          </Group>
        </Ribbon>

        <Workspace>
          <Desk>
            <Canvas>
              <Dot $x={168} $y={110} $s={3} />
              <Dot $x={948} $y={220} $s={2} />
              <Watermark>
                <WatermarkTitle>Activate Windows</WatermarkTitle>
                Go to Settings to activate Windows.
              </Watermark>
            </Canvas>
          </Desk>
          <ScrollBar $vertical>
            <ScrollArrow aria-label="Scroll up"><Chevron dir="up" /></ScrollArrow>
            <Thumb $grow={763} />
            <Remain $grow={38} />
            <ScrollArrow aria-label="Scroll down"><Chevron dir="down" /></ScrollArrow>
          </ScrollBar>
        </Workspace>
        <ScrollBar>
          <ScrollArrow aria-label="Scroll left"><Chevron dir="left" /></ScrollArrow>
          <Thumb $grow={1260} />
          <Remain $grow={23} />
          <ScrollArrow aria-label="Scroll right"><Chevron dir="right" /></ScrollArrow>
        </ScrollBar>

        <StatusBar>
          <StatusCell><MoveIcon />162, 107px</StatusCell>
          <StatusCell><ExtentIcon dashed /></StatusCell>
          <StatusCell><ExtentIcon />1274 × 829px</StatusCell>
          <StatusCell />
          <StatusCell />
          <StatusCell>
            <label htmlFor="zoom">100%</label>
            <ZoomButton aria-label="Zoom out"><ZoomSign /></ZoomButton>
            <ZoomRange id="zoom" type="range" min={0} max={100} defaultValue={50} />
            <ZoomButton aria-label="Zoom in"><ZoomSign plus /></ZoomButton>
          </StatusCell>
        </StatusBar>

        <TaskBar>
          <TaskButton $w={49} aria-label="Start"><WindowsLogo /></TaskButton>
          <SearchBox>
            <SearchGlass />
            <SearchInput type="text" aria-label="Search" placeholder="Type here to search" />
          </SearchBox>
          <Pair>
            <TaskButton $w={50} aria-label="Cortana"><svg width="17" height="17" viewBox="0 0 17 17"><circle cx="8.500" cy="8.500" r="7" fill="none" stroke="#f0f0f0" strokeWidth="2" /></svg></TaskButton>
            <TaskButton $w={50} aria-label="Task view"><TaskView /></TaskButton>
          </Pair>
          {apps.map((a) => <TaskButton key={a.label} aria-label={a.label} $state={a.state}>{a.icon}</TaskButton>)}
          <Tray>
            <TaskButton $w={50} aria-label="People"><People /></TaskButton>
            <TaskButton $w={26} aria-label="Hidden icons"><Chevron dir="up" color="#eee" size={14} weight={1} /></TaskButton>
            <TaskButton $w={24} aria-label="Network"><Network /></TaskButton>
            <TaskButton $w={24} aria-label="Volume"><Speaker /></TaskButton>
            <LanguageButton $w={42}>ગુજ</LanguageButton>
            <Clock>6:06 PM<br />3/1/2023</Clock>
            <TaskButton $w={54} aria-label="Notifications"><Notice /></TaskButton>
            <ShowDesktop aria-label="Show desktop" />
          </Tray>
        </TaskBar>
      </Window>

      {callouts.map((c) => <Callout key={c.text} $x={c.x} $y={c.y}>{c.text}</Callout>)}
      <Arrows width="330" height="1075" viewBox="0 0 330 1075" fill="none" stroke="#000" strokeWidth="6.500" strokeLinejoin="round">
        <path d="M71 90L117 64M71 134L117 108M69 231L132 188M102 660H317M58 1012L119 1056" />
        <path strokeLinecap="round" d="M102 61L118 63 110 76M102 106L118 108 110 120M118 187L133 188 128 202M305 651L318 660 305 670M116 1043L120 1057 105 1058" />
      </Arrows>
    </Sheet>
  );
}
